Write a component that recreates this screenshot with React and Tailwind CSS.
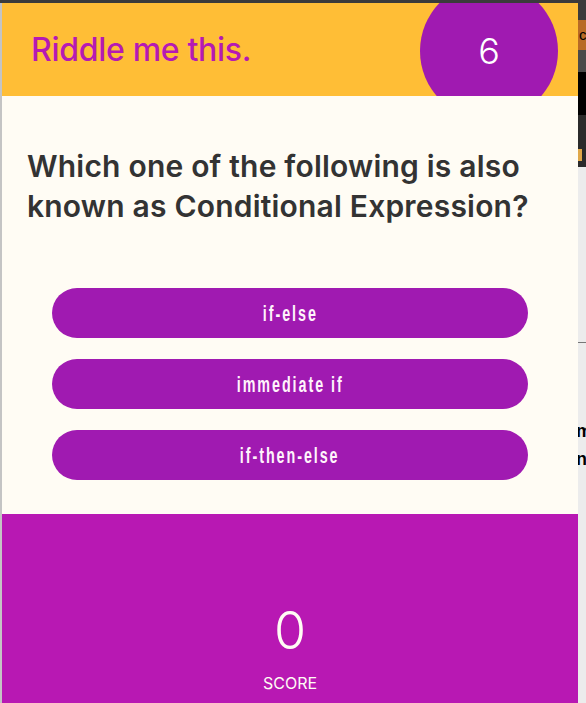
import React from "react";

const OPTIONS = ["if-else", "immediate if", "if-then-else"];

function BackdropStrip() {
  // bits of the page behind the popup, on the right edge
  return (
    <div className="flex w-[8px] shrink-0 flex-col">
      <div className="h-[17px] bg-[#3b3b3b]" />
      <div className="h-[30px] overflow-hidden bg-[#b86a26] pl-[1px] text-[15px] leading-[30px] text-black [font-family:'Liberation_Sans',sans-serif]">c</div>
      <div className="h-[22px] bg-[#4a4a4a]" />
      <div className="h-[43px] bg-black" />
      <div className="flex h-[52px] flex-col justify-end bg-[#2b2b2b] pb-[6px]">
        <div className="h-[12px] w-[4px] bg-[#e0a84a]" />
      </div>
      <div className="h-[175px] bg-[#ececec]" />
      <div className="h-[1px] bg-[#777]" />
      <div className="flex h-[130px] flex-col justify-end overflow-hidden bg-[#ececec] text-[18px] font-bold leading-[28px] text-black [font-family:'Liberation_Sans',sans-serif]">
        <span className="-ml-[2px]">m</span>
        <span className="-ml-[2px]">n</span>
      </div>
      <div className="flex-1 bg-[#ececec]" />
    </div>
  );
}

export default function App() {
  return (
    <div className="flex h-[703px] w-[586px] flex-col overflow-hidden bg-[#3b3b3b]">
      <div className="h-[3px] shrink-0 bg-[#3b3b3b]" />
      <div className="flex min-h-0 flex-1">
        <div className="w-[2px] shrink-0 bg-[#c4c4c4]" />
        <div className="flex w-[576px] flex-col [font-family:Inter,'Open_Sans',sans-serif]">
          {/* header */}
          <div className="relative flex h-[93px] shrink-0 items-center overflow-hidden bg-[#ffbe36] pl-[29px]">
            <h1 className="text-[32px] font-medium tracking-[-0.3px] text-[#b51ab4]">Riddle me this.</h1>
            <div className="absolute left-[418px] top-[-21px] flex h-[138px] w-[138px] items-center justify-center rounded-full bg-[#a01ab1]">
              <span className="text-[36px] font-light text-white">6</span>
            </div>
          </div>

          {/* question + options */}
          <div className="flex h-[418px] shrink-0 flex-col bg-[#fffcf4]">
            <p className="mt-[50px] px-[25px] text-[30px] font-semibold leading-[40px] tracking-[0.2px] text-[#333333]">
              Which one of the following is also known as Conditional Expression?
            </p>
            <div className="mt-[62px] flex flex-col gap-[21px] px-[50px]">
              {OPTIONS.map((opt) => (
                <button
                  key={opt}
                  type="button"
                  className="flex h-[50px] w-[476px] items-center justify-center rounded-full bg-[#a01ab1] text-[#fff4fb]"
                >
                  <span className="inline-block scale-x-[0.65] text-[22px] font-bold tracking-[3px] [font-family:'Liberation_Sans',sans-serif]">
                    {opt}
                  </span>
                </button>
              ))}
            </div>
          </div>

          {/* score */}
          <div className="flex flex-1 flex-col items-center justify-end bg-[#b818b3] pb-[10px] text-[#fffcf4]">
            <span className="text-[52px] font-light leading-[60px]">0</span>
            <span className="mt-[12px] text-[16px] leading-[20px]">SCORE</span>
          </div>
        </div>
        <BackdropStrip />
      </div>
    </div>
  );
}
